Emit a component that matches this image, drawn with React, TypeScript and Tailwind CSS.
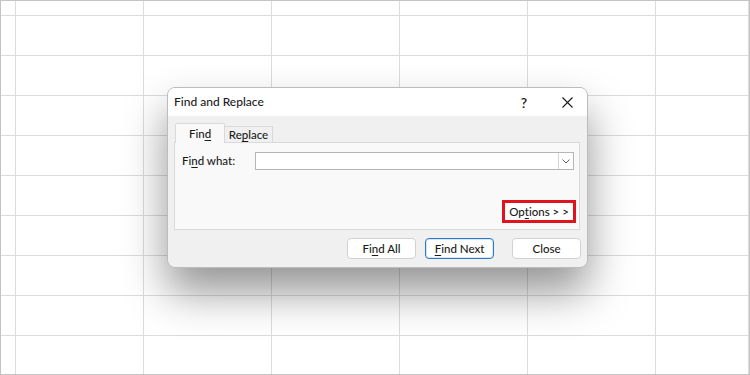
const font = { fontFamily: 'Lato, "Noto Sans", sans-serif' };

const cols = 7;
const rows = 10;

const Sheet = () => (
  <div className="grid h-full w-full grid-cols-[15px_repeat(5,128px)_1fr] grid-rows-[15px_repeat(9,40px)]">
    {Array.from({ length: cols * rows }).map((_, i) => (
      <div key={i} className="border-b border-r border-[#dcdcdc]" />
    ))}
  </div>
);

const Btn = ({ children, primary }: { children: React.ReactNode; primary?: boolean }) => (
  <button
    className={
      "flex h-[21px] w-[69px] items-center justify-center rounded-[4px] bg-white text-[11.5px] font-medium text-[#1b1b1b] " +
      (primary ? "border border-[#2b78c4] shadow-[inset_0_0_0_1px_#d6e7f8]" : "border border-[#d1d1d1]")
    }
  >
    {children}
  </button>
);

const App = () => {
  return (
    <div style={font} className="relative h-[375px] w-[750px] overflow-hidden border border-[#c4c4c4] bg-white">
      <Sheet />

      {/* dialog */}
      <div className="absolute left-[166px] top-[86px] flex h-[181px] w-[421px] flex-col overflow-hidden rounded-[8px] border border-[#bcbcbc] bg-[#f0f0f0] shadow-[0_24px_44px_rgba(0,0,0,0.42)]">
        <div className="flex h-[28px] shrink-0 items-center bg-white pl-[6px] text-[12px] font-medium text-[#1b1b1b]">
          <span>Find and Replace</span>
          <span className="ml-auto mr-[35px] text-[14px] font-semibold">?</span>
          <svg className="mr-[14px]" width="11" height="11" viewBox="0 0 11 11">
            <path d="M0.5 0.5 L10.5 10.5 M10.5 0.5 L0.5 10.5" stroke="#1b1b1b" strokeWidth="1.1" fill="none" />
          </svg>
        </div>

        <div className="flex flex-1 flex-col px-[6px] pt-[7px]">
          {/* tabs */}
          <div className="flex items-end pl-[1px] text-[11.5px] font-medium text-[#1b1b1b]">
            <div className="relative z-10 -mb-px flex h-[20px] w-[50px] items-center justify-center rounded-t-[2px] border border-b-0 border-[#d9d9d9] bg-[#f9f9f9]">
              Fin<span className="underline underline-offset-2">d</span>
            </div>
            <div className="flex h-[16px] w-[48px] items-center justify-center border border-b-0 border-l-0 border-[#d9d9d9] bg-[#f0f0f0] pt-[1px]">
              Re<span className="underline underline-offset-2">p</span>lace
            </div>
          </div>

          {/* panel */}
          <div className="flex h-[88px] w-[406px] flex-col border border-[#d9d9d9] bg-[#f9f9f9] pl-[7px] pr-[3px] pt-[9px] text-[11.5px] font-medium text-[#1b1b1b]">
            <div className="flex items-center pr-[2px]">
              <span className="w-[73px]">
                Fi<span className="underline underline-offset-2">n</span>d what:
              </span>
              <div className="flex h-[18px] flex-1 border border-[#b5b5b5] bg-white">
                <div className="flex-1" />
                <div className="flex w-[15px] items-center justify-center border-l border-[#d4d4d4]">
                  <svg width="8" height="5" viewBox="0 0 8 5">
                    <path d="M0.5 0.5 L4 4 L7.5 0.5" stroke="#606060" strokeWidth="1" fill="none" />
                  </svg>
                </div>
              </div>
            </div>
            <div className="mt-auto mb-[6px] flex justify-end">
              <div className="flex h-[23px] w-[74px] items-center justify-center border-[3px] border-[#e0141e] bg-white">
                Op<span className="underline underline-offset-2">t</span>ions &gt; &gt;
              </div>
            </div>
          </div>

          {/* buttons */}
          <div className="mt-[8px] flex justify-end">
            <Btn>
              Fi<span className="underline underline-offset-2">n</span>d All
            </Btn>
            <div className="w-[9px]" />
            <Btn primary>
              <span className="underline underline-offset-2">F</span>ind Next
            </Btn>
            <div className="w-[18px]" />
            <Btn>Close</Btn>
          </div>
        </div>
      </div>
    </div>
  );
};

export default App;
